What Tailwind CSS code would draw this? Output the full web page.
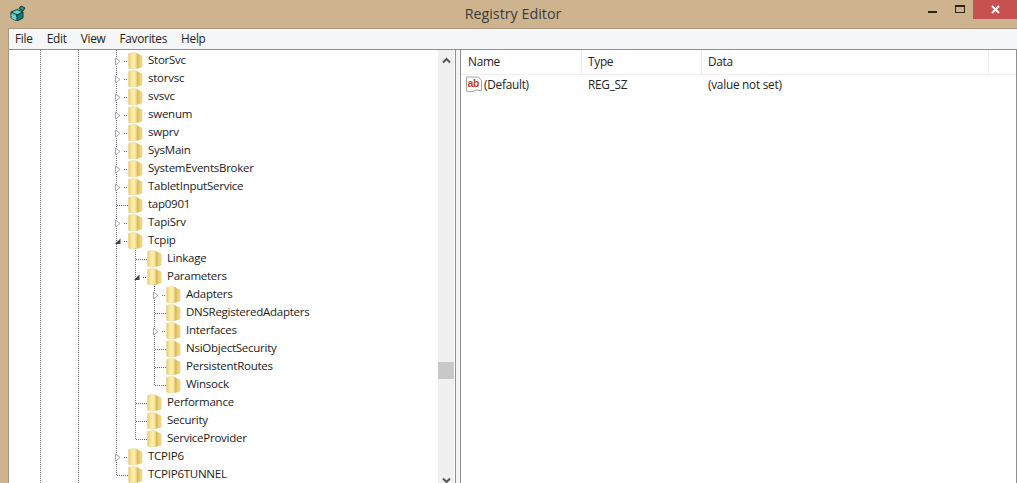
<!DOCTYPE html>
<html>

<head>
    <title>Registry Editor</title>
    <meta charset="utf-8">
    <script src="https://cdn.jsdelivr.net/npm/@tailwindcss/browser@4"></script>
</head>

<body class="w-[1017px] h-[483px] overflow-hidden bg-[#cdb48f] font-['Open_Sans','Noto_Sans',sans-serif] text-[11.500px] tracking-[-0.25px] text-[#1a1a1a] flex flex-col">
    <svg class="absolute w-0 h-0">
        <defs>
            <linearGradient id="fold" x1="0" x2="1" y1="0" y2="0">
                <stop offset="0" stop-color="#e6c868" />
                <stop offset="0.3" stop-color="#f8e596" />
                <stop offset="0.62" stop-color="#fdf0b4" />
                <stop offset="1" stop-color="#f1d77e" />
            </linearGradient>
            <linearGradient id="flap" x1="0" x2="1" y1="0" y2="0">
                <stop offset="0" stop-color="#d3b24e" />
                <stop offset="0.5" stop-color="#e9cd72" />
                <stop offset="1" stop-color="#f3df93" />
            </linearGradient>
        </defs>
        <symbol id="folder" viewBox="0 0 15 17">
            <path d="M0.500 1.500 L5 0.500 L9 1 V16.500 H1.500 Q0.500 16.500 0.500 15.500 Z" fill="url(#fold)" stroke="#e6d08a" stroke-width="0.5" />
            <path d="M9 1.500 L14 4 V15 L9 16.500 Z" fill="url(#flap)" stroke="#dcc273" stroke-width="0.5" />
        </symbol>
        <symbol id="closed" viewBox="0 0 18 18">
            <path d="M5.500 7 L10 10.500 L5.500 14 Z" fill="#fff" stroke="#a6a6a6" />
            <path d="M14 10.500 H18" stroke="#666" stroke-dasharray="1 1" />
        </symbol>
        <symbol id="open" viewBox="0 0 18 18">
            <path d="M5 13 H10.500 V7.500 Z" fill="#444" />
            <path d="M14 10.500 H18" stroke="#666" stroke-dasharray="1 1" />
        </symbol>
        <symbol id="leaf" viewBox="0 0 18 18">
            <path d="M7 10.500 H18" stroke="#666" stroke-dasharray="1 1" />
        </symbol>
    </svg>

    <!-- title bar -->
    <header class="h-[28px] shrink-0 flex items-start">
        <svg class="ml-[10px] mt-[5px] w-[16px] h-[16px] shrink-0" viewBox="0 0 16 16">
            <path d="M1 7 L7 4.500 L13 7 L7 10 Z" fill="#5fd6cc" stroke="#0d3b3b" />
            <path d="M1 7 V13 L7 16 V10 Z" fill="#2fb8b0" stroke="#0d3b3b" />
            <path d="M13 7 V13 L7 16 V10 Z" fill="#14787c" stroke="#0d3b3b" />
            <path d="M3 8 V14 M5 9 V15 M1 10 L7 13 M1 12.500 L7 15" stroke="#c9f3ee" stroke-width="0.5" />
            <path d="M9 3.500 L11 1 L15 3 L13 6 Z" fill="#2a8c8c" stroke="#0d3b3b" />
        </svg>
        <h1 class="flex-1 pl-[83px] text-center text-[14.300px] tracking-normal leading-[28px] text-[#3a3a3a]">Registry Editor</h1>
        <div class="flex items-start shrink-0">
            <button class="w-[30px] h-[19px] flex justify-center"><span class="mt-[11px] w-[9px] h-[2px] bg-[#2e2413]"></span></button>
            <button class="w-[26px] h-[19px] flex justify-center"><span class="mt-[5px] w-[10px] h-[8px] border border-t-2 border-[#2e2413]"></span></button>
            <button class="w-[44px] h-[19px] bg-[#c75050] flex items-center justify-center">
                <svg class="w-[9px] h-[9px]" viewBox="0 0 9 9"><path d="M1 1 L8 8 M8 1 L1 8" stroke="#fff" stroke-width="2" /></svg>
            </button>
        </div>
    </header>

    <!-- client area -->
    <div class="flex-1 min-h-0 ml-[8px] flex flex-col bg-white border-l border-t border-[#a8977c]">
        <nav class="h-[20px] shrink-0 bg-[#f5f6f7] flex items-center pl-[6px] gap-[14px] text-[11.800px] text-[#222]">
            <span>File</span><span>Edit</span><span>View</span><span>Favorites</span><span>Help</span>
        </nav>

        <div class="flex-1 min-h-0 flex border-t border-[#8f8f8f]">
            <!-- key tree -->
            <div class="w-[447px] shrink-0 flex relative overflow-hidden border-r border-[#8f8f8f]">
                <div class="absolute left-[31px] inset-y-0 border-l border-dotted border-[#666]"></div>
                <div class="absolute left-[69px] inset-y-0 border-l border-dotted border-[#666]"></div>
                <div class="absolute left-[107px] top-0 h-[425px] border-l border-dotted border-[#666]"></div>
                <div class="absolute left-[126px] top-[196px] h-[193px] border-l border-dotted border-[#666]"></div>
                <div class="absolute left-[145px] top-[232px] h-[103px] border-l border-dotted border-[#666]"></div>

                <ul class="flex-1 pt-[1px] relative">
                    <li class="h-[18px] flex items-center pl-[101px]"><svg class="w-[18px] h-[18px]"><use href="#closed" /></svg><svg class="w-[15px] h-[17px]"><use href="#folder" /></svg><span class="ml-[5px]">StorSvc</span></li>
                    <li class="h-[18px] flex items-center pl-[101px]"><svg class="w-[18px] h-[18px]"><use href="#closed" /></svg><svg class="w-[15px] h-[17px]"><use href="#folder" /></svg><span class="ml-[5px]">storvsc</span></li>
                    <li class="h-[18px] flex items-center pl-[101px]"><svg class="w-[18px] h-[18px]"><use href="#closed" /></svg><svg class="w-[15px] h-[17px]"><use href="#folder" /></svg><span class="ml-[5px]">svsvc</span></li>
                    <li class="h-[18px] flex items-center pl-[101px]"><svg class="w-[18px] h-[18px]"><use href="#closed" /></svg><svg class="w-[15px] h-[17px]"><use href="#folder" /></svg><span class="ml-[5px]">swenum</span></li>
                    <li class="h-[18px] flex items-center pl-[101px]"><svg class="w-[18px] h-[18px]"><use href="#closed" /></svg><svg class="w-[15px] h-[17px]"><use href="#folder" /></svg><span class="ml-[5px]">swprv</span></li>
                    <li class="h-[18px] flex items-center pl-[101px]"><svg class="w-[18px] h-[18px]"><use href="#closed" /></svg><svg class="w-[15px] h-[17px]"><use href="#folder" /></svg><span class="ml-[5px]">SysMain</span></li>
                    <li class="h-[18px] flex items-center pl-[101px]"><svg class="w-[18px] h-[18px]"><use href="#closed" /></svg><svg class="w-[15px] h-[17px]"><use href="#folder" /></svg><span class="ml-[5px]">SystemEventsBroker</span></li>
                    <li class="h-[18px] flex items-center pl-[101px]"><svg class="w-[18px] h-[18px]"><use href="#closed" /></svg><svg class="w-[15px] h-[17px]"><use href="#folder" /></svg><span class="ml-[5px]">TabletInputService</span></li>
                    <li class="h-[18px] flex items-center pl-[101px]"><svg class="w-[18px] h-[18px]"><use href="#leaf" /></svg><svg class="w-[15px] h-[17px]"><use href="#folder" /></svg><span class="ml-[5px]">tap0901</span></li>
                    <li class="h-[18px] flex items-center pl-[101px]"><svg class="w-[18px] h-[18px]"><use href="#closed" /></svg><svg class="w-[15px] h-[17px]"><use href="#folder" /></svg><span class="ml-[5px]">TapiSrv</span></li>
                    <li class="h-[18px] flex items-center pl-[101px]"><svg class="w-[18px] h-[18px]"><use href="#open" /></svg><svg class="w-[15px] h-[17px]"><use href="#folder" /></svg><span class="ml-[5px]">Tcpip</span></li>
                    <li class="h-[18px] flex items-center pl-[120px]"><svg class="w-[18px] h-[18px]"><use href="#leaf" /></svg><svg class="w-[15px] h-[17px]"><use href="#folder" /></svg><span class="ml-[5px]">Linkage</span></li>
                    <li class="h-[18px] flex items-center pl-[120px]"><svg class="w-[18px] h-[18px]"><use href="#open" /></svg><svg class="w-[15px] h-[17px]"><use href="#folder" /></svg><span class="ml-[5px]">Parameters</span></li>
                    <li class="h-[18px] flex items-center pl-[139px]"><svg class="w-[18px] h-[18px]"><use href="#closed" /></svg><svg class="w-[15px] h-[17px]"><use href="#folder" /></svg><span class="ml-[5px]">Adapters</span></li>
                    <li class="h-[18px] flex items-center pl-[139px]"><svg class="w-[18px] h-[18px]"><use href="#leaf" /></svg><svg class="w-[15px] h-[17px]"><use href="#folder" /></svg><span class="ml-[5px]">DNSRegisteredAdapters</span></li>
                    <li class="h-[18px] flex items-center pl-[139px]"><svg class="w-[18px] h-[18px]"><use href="#closed" /></svg><svg class="w-[15px] h-[17px]"><use href="#folder" /></svg><span class="ml-[5px]">Interfaces</span></li>
                    <li class="h-[18px] flex items-center pl-[139px]"><svg class="w-[18px] h-[18px]"><use href="#leaf" /></svg><svg class="w-[15px] h-[17px]"><use href="#folder" /></svg><span class="ml-[5px]">NsiObjectSecurity</span></li>
                    <li class="h-[18px] flex items-center pl-[139px]"><svg class="w-[18px] h-[18px]"><use href="#leaf" /></svg><svg class="w-[15px] h-[17px]"><use href="#folder" /></svg><span class="ml-[5px]">PersistentRoutes</span></li>
                    <li class="h-[18px] flex items-center pl-[139px]"><svg class="w-[18px] h-[18px]"><use href="#leaf" /></svg><svg class="w-[15px] h-[17px]"><use href="#folder" /></svg><span class="ml-[5px]">Winsock</span></li>
                    <li class="h-[18px] flex items-center pl-[120px]"><svg class="w-[18px] h-[18px]"><use href="#leaf" /></svg><svg class="w-[15px] h-[17px]"><use href="#folder" /></svg><span class="ml-[5px]">Performance</span></li>
                    <li class="h-[18px] flex items-center pl-[120px]"><svg class="w-[18px] h-[18px]"><use href="#leaf" /></svg><svg class="w-[15px] h-[17px]"><use href="#folder" /></svg><span class="ml-[5px]">Security</span></li>
                    <li class="h-[18px] flex items-center pl-[120px]"><svg class="w-[18px] h-[18px]"><use href="#leaf" /></svg><svg class="w-[15px] h-[17px]"><use href="#folder" /></svg><span class="ml-[5px]">ServiceProvider</span></li>
                    <li class="h-[18px] flex items-center pl-[101px]"><svg class="w-[18px] h-[18px]"><use href="#closed" /></svg><svg class="w-[15px] h-[17px]"><use href="#folder" /></svg><span class="ml-[5px]">TCPIP6</span></li>
                    <li class="h-[18px] flex items-center pl-[101px]"><svg class="w-[18px] h-[18px]"><use href="#leaf" /></svg><svg class="w-[15px] h-[17px]"><use href="#folder" /></svg><span class="ml-[5px]">TCPIP6TUNNEL</span></li>
                </ul>

                <!-- scrollbar -->
                <div class="w-[16px] mr-[1px] shrink-0 bg-[#f0f0f0] flex flex-col items-center relative">
                    <svg class="mt-[7px] w-[9px] h-[7px]" viewBox="0 0 9 7"><path d="M1 5.500 L4.500 2 L8 5.500" fill="none" stroke="#555" stroke-width="2" /></svg>
                    <div class="absolute top-[312px] inset-x-0 h-[17px] bg-[#c8c8c8]"></div>
                    <svg class="absolute -bottom-[1px] w-[9px] h-[7px]" viewBox="0 0 9 7"><path d="M1 1.500 L4.500 5 L8 1.500" fill="none" stroke="#555" stroke-width="2" /></svg>
                </div>
            </div>

            <!-- splitter -->
            <div class="w-[4px] shrink-0 bg-[#f3f4f5]"></div>

            <!-- value list -->
            <div class="flex-1 min-w-0 bg-white border-l border-r border-[#8f8f8f] text-[11.800px] text-[#222]">
                <div class="h-[25px] flex items-center border-b border-[#f0f0f0]">
                    <div class="w-[121px] h-full pl-[7px] flex items-center border-r border-[#ececec]">Name</div>
                    <div class="w-[120px] h-full pl-[6px] flex items-center border-r border-[#ececec]">Type</div>
                    <div class="w-[287px] h-full pl-[6px] flex items-center border-r border-[#ececec]">Data</div>
                </div>
                <div class="h-[19px] flex items-center">
                    <div class="w-[121px] pl-[5px] flex items-center">
                        <svg class="w-[17px] h-[17px] shrink-0" viewBox="0 0 17 17">
                            <path d="M0.500 1 H12 L15.500 4 V15 Q12 13 8 15 Q4 16.500 0.500 15 Z" fill="#fff" stroke="#a3a3a3" />
                            <text x="1.500" y="10.500" font-size="10.500" font-weight="700" fill="#c8401c" font-family="Liberation Sans">ab</text>
                        </svg>
                        <span class="ml-[1px]">(Default)</span>
                    </div>
                    <div class="w-[120px] pl-[6px]">REG_SZ</div>
                    <div class="pl-[6px]">(value not set)</div>
                </div>
            </div>
        </div>
    </div>
</body>

</html>
